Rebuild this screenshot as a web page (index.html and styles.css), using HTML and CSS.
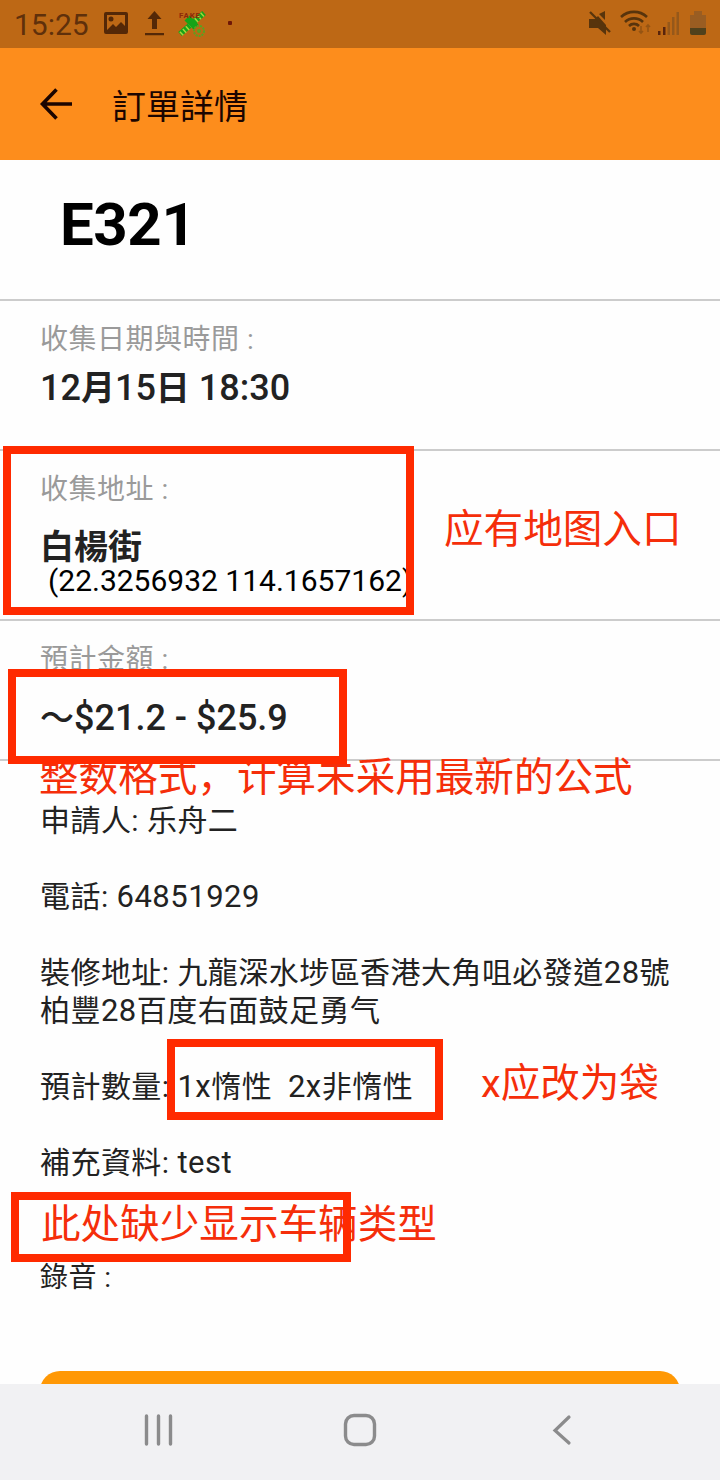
FILE: index.html
```
<!DOCTYPE html>
<html lang="zh-Hant">
<head>
    <meta charset="UTF-8">
    <meta name="viewport" content="width=device-width, initial-scale=1.0">
    <title>訂單詳情</title>
    <link rel="stylesheet" href="styles.css">
</head>
<body>
    <div class="screen">
        <!-- Status bar -->
        <div class="status-bar">
            <span class="clock">15:25</span>
            <svg class="status-left" width="136" height="32" viewBox="100 8 136 32">
                <path fill="#542807" fill-rule="evenodd" d="M106 12h20a2 2 0 0 1 2 2v18a2 2 0 0 1-2 2h-20a2 2 0 0 1-2-2v-18a2 2 0 0 1 2-2zM107 15v15l6-6 3 3 5-5 4 4v-11zM111 16.500a2.500 2.500 0 1 1 0 5 2.500 2.500 0 0 1 0-5z"/>
                <path fill="#542807" d="M154.500 11l7 8h-4.500v10h-5v-10h-4.500zM145 33h19v2.200h-19z"/>
                <path d="M180 34l24-21" stroke="#16a318" stroke-width="5.500"/>
                <path d="M181 34l22-20" stroke="#a5d63b" stroke-width="5" stroke-dasharray="1.500 2.500"/>
                <path d="M187 18l9 9" stroke="#16a318" stroke-width="7"/>
                <circle cx="199" cy="31" r="5" fill="none" stroke="#59a221" stroke-width="2" stroke-dasharray="2 1"/>
                <circle cx="199" cy="31" r="2" fill="#59a221"/>
                <text x="179" y="17.500" class="fake">FAKE</text>
                <rect x="228" y="21" width="4" height="4" rx="1" fill="#6f1707"/>
            </svg>
            <svg class="status-right" width="124" height="32" viewBox="586 8 124 32">
                <path fill="#58340c" d="M589 19h6l3-3 8 9v10l-8-7h-9zM599 14l6-3v9z"/>
                <path d="M590 12l20 20" stroke="#58340c" stroke-width="2.300"/>
                <g fill="none" stroke="#58340c" stroke-width="2.600">
                    <path d="M621 17a19 19 0 0 1 26 0M625 22a13 13 0 0 1 18 0M629 26a7 7 0 0 1 10 0"/>
                </g>
                <circle cx="634" cy="29" r="2" fill="#58340c"/>
                <path d="M641 26v7m-2-2l2 2 2-2M648 32v-7m-2 2l2-2 2 2" fill="none" stroke="#965412" stroke-width="1.600"/>
                <path d="M658 31h2.500v4h-2.500zM663 27h2.500v8h-2.500z" fill="#58240c"/>
                <path d="M667.500 22h2.500v13h-2.500zM672 17h2.500v18h-2.500zM676.500 12h2.500v23h-2.500z" fill="#96581a"/>
                <path d="M690 15h4v-4h8v4h4v13h-16z" fill="#9a5d22"/>
                <path d="M690 28h16v5a2 2 0 0 1-2 2h-12a2 2 0 0 1-2-2z" fill="#50411c"/>
            </svg>
        </div>

        <!-- App bar -->
        <header class="app-bar">
            <svg width="34" height="34" viewBox="0 0 34 34">
                <path d="M17.500 2.500L3.500 17l14 14.500M3.500 17H33" fill="none" stroke="#1c0500" stroke-width="3.600"/>
            </svg>
            <span class="app-title">訂單詳情</span>
        </header>

        <main class="content">
            <h1 class="order-no">E321</h1>

            <section class="row row-date">
                <div class="label">收集日期與時間 :</div>
                <div class="value"><span class="big">12</span>月<span class="big">15</span>日<span class="big"> 18:30</span></div>
            </section>

            <section class="row row-address">
                <div class="label">收集地址 :</div>
                <div class="value">白楊街</div>
                <div class="coords">(22.3256932 114.1657162)</div>
                <div class="mark-box box-address"></div>
                <div class="mark-text text-map" lang="zh-Hans">应有地图入口</div>
            </section>

            <section class="row row-amount">
                <div class="label">預計金額 :</div>
                <div class="value"><span class="tilde">～</span><span class="big">$21.2 - $25.9</span></div>
                <div class="mark-text text-format" lang="zh-Hans">整数格式，计算未采用最新的公式</div>
                <div class="mark-box box-amount"></div>
            </section>

            <section class="details">
                <p>申請人: 乐舟二</p>
                <p>電話: <span class="num">64851929</span></p>
                <p>裝修地址: 九龍深水埗區香港大角咀必發道<span class="num">28</span>號<br>柏豐<span class="num">28</span>百度右面鼓足勇气</p>
                <p class="quantity">預計數量: <span class="num">1x</span>惰性&nbsp; <span class="num">2x</span>非惰性
                    <span class="mark-box box-quantity"></span>
                    <span class="mark-text text-bag" lang="zh-Hans">x应改为袋</span>
                </p>
                <p>補充資料: <span class="num">test</span></p>
                <div class="voice">錄音 :
                    <span class="mark-text text-vehicle" lang="zh-Hans">此处缺少显示车辆类型</span>
                    <span class="mark-box box-vehicle"></span>
                </div>
            </section>

            <div class="submit"></div>
        </main>

        <!-- Android navigation -->
        <nav class="nav-bar">
            <svg width="32" height="32" viewBox="0 0 32 32">
                <path d="M3.500 2v28M15.500 2v28M27.500 2v28" stroke="#8b8b8c" stroke-width="3.400" stroke-linecap="round"/>
            </svg>
            <svg width="36" height="36" viewBox="0 0 36 36">
                <rect x="3.500" y="3.500" width="29" height="29" rx="8.500" fill="none" stroke="#8b8b8c" stroke-width="3.400"/>
            </svg>
            <svg width="32" height="32" viewBox="0 0 32 32">
                <path d="M24 3L10 16.500l14 12.500" fill="none" stroke="#8b8b8c" stroke-width="3.200" stroke-linecap="round"/>
            </svg>
        </nav>
    </div>
</body>
</html>
```
FILE: styles.css
```
* {
    box-sizing: border-box;
}

body {
    margin: 0;
    font-family: Roboto, "Noto Sans CJK TC", sans-serif;
    background-color: #fefefe;
    color: #222;
}

svg {
    display: block;
    flex-shrink: 0;
}

.screen {
    display: flex;
    flex-direction: column;
    width: 720px;
    height: 1480px;
    overflow: hidden;
}

.status-bar {
    display: flex;
    align-items: center;
    height: 48px;
    padding: 0 10px 0 14px;
    background-color: #bd6815;
}

.clock {
    width: 86px;
    font-size: 30px;
    color: #5f300b;
}

.status-right {
    margin-left: auto;
}

.fake {
    font-size: 8px;
    font-weight: bold;
    letter-spacing: 0.8px;
    fill: #8d2a09;
}

.app-bar {
    display: flex;
    align-items: center;
    gap: 39px;
    height: 112px;
    padding-left: 39px;
    background-color: #fd8d1c;
}

.app-title {
    font-size: 34px;
    color: #1c0500;
}

.content {
    flex: 1;
    display: flex;
    flex-direction: column;
    overflow: hidden;
}

.order-no {
    height: 139px;
    flex-shrink: 0;
    margin: 0;
    padding: 28px 0 0 60px;
    font-size: 60px;
    line-height: 74px;
    font-weight: bold;
    letter-spacing: -0.4px;
    color: #000;
}

.row {
    position: relative;
    flex-shrink: 0;
    padding: 19px 40px 0;
    border-top: 2px solid #ccc;
}

.row-date {
    height: 150px;
}

.row-address {
    height: 170px;
}

.row-amount {
    height: 140px;
}

.label {
    font-size: 28px;
    line-height: 40px;
    letter-spacing: 0.5px;
    color: #9a9a9a;
}

.value {
    margin-top: 5px;
    font-size: 34px;
    line-height: 46px;
    font-weight: bold;
}

.big {
    font-size: 36px;
    font-weight: 500;
}

.tilde {
    font-weight: 500;
}

.row-address .value {
    margin-top: 14px;
}

.row-amount .value {
    margin-top: 15px;
}

.coords {
    padding-left: 8px;
    margin-top: -7px;
    font-size: 30px;
    line-height: 36px;
    color: #000;
}

.details {
    flex-shrink: 0;
    height: 612px;
    padding: 41px 0 0 40px;
    border-top: 2px solid #ccc;
    font-size: 30px;
    line-height: 38px;
    letter-spacing: 0.45px;
    white-space: nowrap;
}

.details p {
    margin: 0 0 38px;
}

.num {
    font-size: 31px;
    line-height: 1;
    letter-spacing: 0.5px;
}

.quantity,
.voice {
    position: relative;
}

.voice {
    margin-top: 77px;
    font-size: 28px;
}

.submit {
    flex-shrink: 0;
    height: 80px;
    margin: 0 40px;
    border-radius: 20px;
    background-color: #ff9805;
}

/* review marks drawn over the page */
.mark-box {
    position: absolute;
    border: 8px solid #ff2a00;
}

.mark-text {
    position: absolute;
    font-family: Roboto, "Noto Sans CJK SC", sans-serif;
    font-size: 39.600px;
    line-height: 48px;
    letter-spacing: 0;
    white-space: nowrap;
    color: #f52e0a;
}

.box-address {
    left: 3px;
    top: -5px;
    width: 411px;
    height: 169px;
}

.text-map {
    left: 444px;
    top: 55px;
}

.box-amount {
    left: 8px;
    top: 48px;
    width: 339px;
    height: 95px;
}

.text-format {
    left: 39px;
    top: 133px;
    z-index: 1;
}

.box-amount {
    z-index: 2;
}

.box-quantity {
    left: 127px;
    top: -29px;
    width: 276px;
    height: 81px;
}

.text-bag {
    left: 441px;
    top: -8px;
}

.box-vehicle {
    left: -29px;
    top: -67px;
    width: 340px;
    height: 70px;
}

.text-vehicle {
    left: 1px;
    top: -58px;
}

.nav-bar {
    display: flex;
    flex-shrink: 0;
    align-items: center;
    justify-content: space-between;
    height: 96px;
    padding: 0 143px 4px;
    background-color: #f1f1f3;
}
```
